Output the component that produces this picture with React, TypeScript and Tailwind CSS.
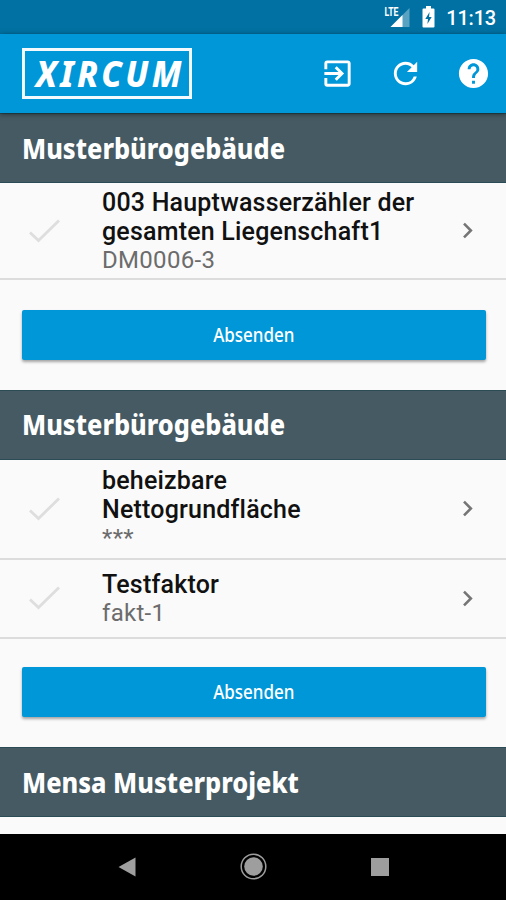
import { MdChevronRight, MdExitToApp, MdHelp, MdRefresh } from "react-icons/md";

type Item = { title: string[]; subtitle: string; rowClass: string };
type Section = { name: string; footerClass: string; items: Item[] };

const sections: Section[] = [
  {
    name: "Musterbürogebäude",
    footerClass: "pt-[30px] pb-[29.5px]",
    items: [
      {
        title: ["003 Hauptwasserzähler der", "gesamten Liegenschaft1"],
        subtitle: "DM0006-3",
        rowClass: "h-[97px]",
      },
    ],
  },
  {
    name: "Musterbürogebäude",
    footerClass: "pt-[28.5px] pb-[30px]",
    items: [
      {
        title: ["beheizbare", "Nettogrundfläche"],
        subtitle: "***",
        rowClass: "h-[100px]",
      },
      { title: ["Testfaktor"], subtitle: "fakt-1", rowClass: "h-[79px]" },
    ],
  },
];

function StatusBar() {
  return (
    <div className="flex h-[34px] items-center justify-end bg-[#0071a2] pr-[10px] text-white">
      <svg width="27" height="24" viewBox="0 0 27 24" className="mr-[12px]">
        <path d="M26.500 3V22H7.500Z" fill="#fff" fillOpacity="0.35" />
        <path d="M19.500 10V22H7.500Z" fill="#fff" />
        <text
          x="1.500"
          y="11"
          fontSize="12.5"
          fontWeight="700"
          fill="#fff"
          fontFamily="Roboto, sans-serif"
          textLength="14"
          lengthAdjust="spacingAndGlyphs"
        >
          LTE
        </text>
      </svg>
      <svg width="13" height="22" viewBox="0 0 13 22" className="mr-[11px]">
        <path
          d="M4 0h5v2.500h2.500a1 1 0 0 1 1 1V20.500a1 1 0 0 1-1 1H1.500a1 1 0 0 1-1-1V3.500a1 1 0 0 1 1-1H4Z"
          fill="#fff"
        />
        <path d="M7.600 6L3.300 13H6L5.400 18L9.700 11H7Z" fill="#0071a2" />
      </svg>
      <span className="pt-[2px] text-[20px] font-medium leading-none tracking-[-0.2px]">11:13</span>
    </div>
  );
}

function AppBar() {
  return (
    <header className="relative z-10 flex h-[79px] items-center bg-[#0097d9] pr-[15px] pl-[22px] text-white shadow-[0_1px_5px_rgba(0,0,0,0.5)]">
      <div className="flex h-[51px] w-[170px] items-center justify-center border-[3px] border-white/95">
        <span className="inline-block scale-x-[0.95] pl-[6px] font-['Noto_Sans'] text-[35px] leading-none font-extrabold tracking-[3.500px] italic">
          XIRCUM
        </span>
      </div>
      <div className="ml-auto flex gap-[33px]">
        <MdExitToApp size={35} />
        <MdRefresh size={35} />
        <MdHelp size={35} />
      </div>
    </header>
  );
}

function SectionHeader({ name }: { name: string }) {
  return (
    <h2 className="flex h-[70px] items-center border-y border-[#2b4b55] bg-[#455a63] pb-[2px] pl-[22px] text-white">
      <span className="inline-block origin-left scale-x-[0.873] font-['Noto_Sans'] text-[29px] leading-none font-extrabold whitespace-nowrap">
        {name}
      </span>
    </h2>
  );
}

function Row({ item }: { item: Item }) {
  return (
    <li className={`flex items-center border-b-2 border-[#dcdcdc] pr-[23px] pl-[28px] ${item.rowClass}`}>
      <svg width="34" height="26" viewBox="0 0 34 26" fill="none" className="shrink-0">
        <path d="M2 14.500L10.500 22.500L31 2.500" stroke="#dedede" strokeWidth="2.800" />
      </svg>
      <div className="ml-[40px] flex-1 pt-[1px] whitespace-nowrap">
        {item.title.map((line) => (
          <p key={line} className="text-[25px] leading-[29px] font-medium tracking-[0.2px] text-[#111]">
            {line}
          </p>
        ))}
        <p className="text-[24px] leading-[28px] tracking-[0.3px] text-[#6c6c6c]">{item.subtitle}</p>
      </div>
      <MdChevronRight size={31} className="shrink-0 text-[#757575]" />
    </li>
  );
}

function SubmitButton({ className }: { className: string }) {
  return (
    <div className={`pr-[20px] pl-[22px] ${className}`}>
      <button className="flex h-[50px] w-full items-center justify-center rounded-[2px] bg-[#0097d9] text-white shadow-[0_2px_3px_rgba(0,0,0,0.35)]">
        <span className="inline-block scale-x-[0.85] font-['Noto_Sans'] text-[20px] leading-none font-medium">
          Absenden
        </span>
      </button>
    </div>
  );
}

function NavBar() {
  return (
    <nav className="flex h-[66px] items-center justify-between bg-black pr-[117px] pl-[118px] text-[#9e9e9e]">
      <svg width="18" height="20" viewBox="0 0 18 20">
        <path d="M0.500 10L17.500 0.500V19.500Z" fill="currentColor" />
      </svg>
      <svg width="28" height="28" viewBox="0 0 28 28">
        <circle cx="13.500" cy="13.500" r="12.300" fill="none" stroke="currentColor" strokeWidth="1.500" />
        <circle cx="13.500" cy="13.500" r="9.300" fill="currentColor" />
      </svg>
      <div className="size-[18px] bg-[#9e9e9e]" />
    </nav>
  );
}

export default function App() {
  return (
    <div className="flex h-[900px] w-[506px] flex-col overflow-hidden bg-[#fafafa] font-['Roboto',sans-serif]">
      <StatusBar />
      <AppBar />
      <main className="flex-1 overflow-hidden">
        {sections.map((section, i) => (
          <section key={i}>
            <SectionHeader name={section.name} />
            <ul>
              {section.items.map((item) => (
                <Row key={item.subtitle} item={item} />
              ))}
            </ul>
            <SubmitButton className={section.footerClass} />
          </section>
        ))}
        <SectionHeader name="Mensa Musterprojekt" />
      </main>
      <NavBar />
    </div>
  );
}
